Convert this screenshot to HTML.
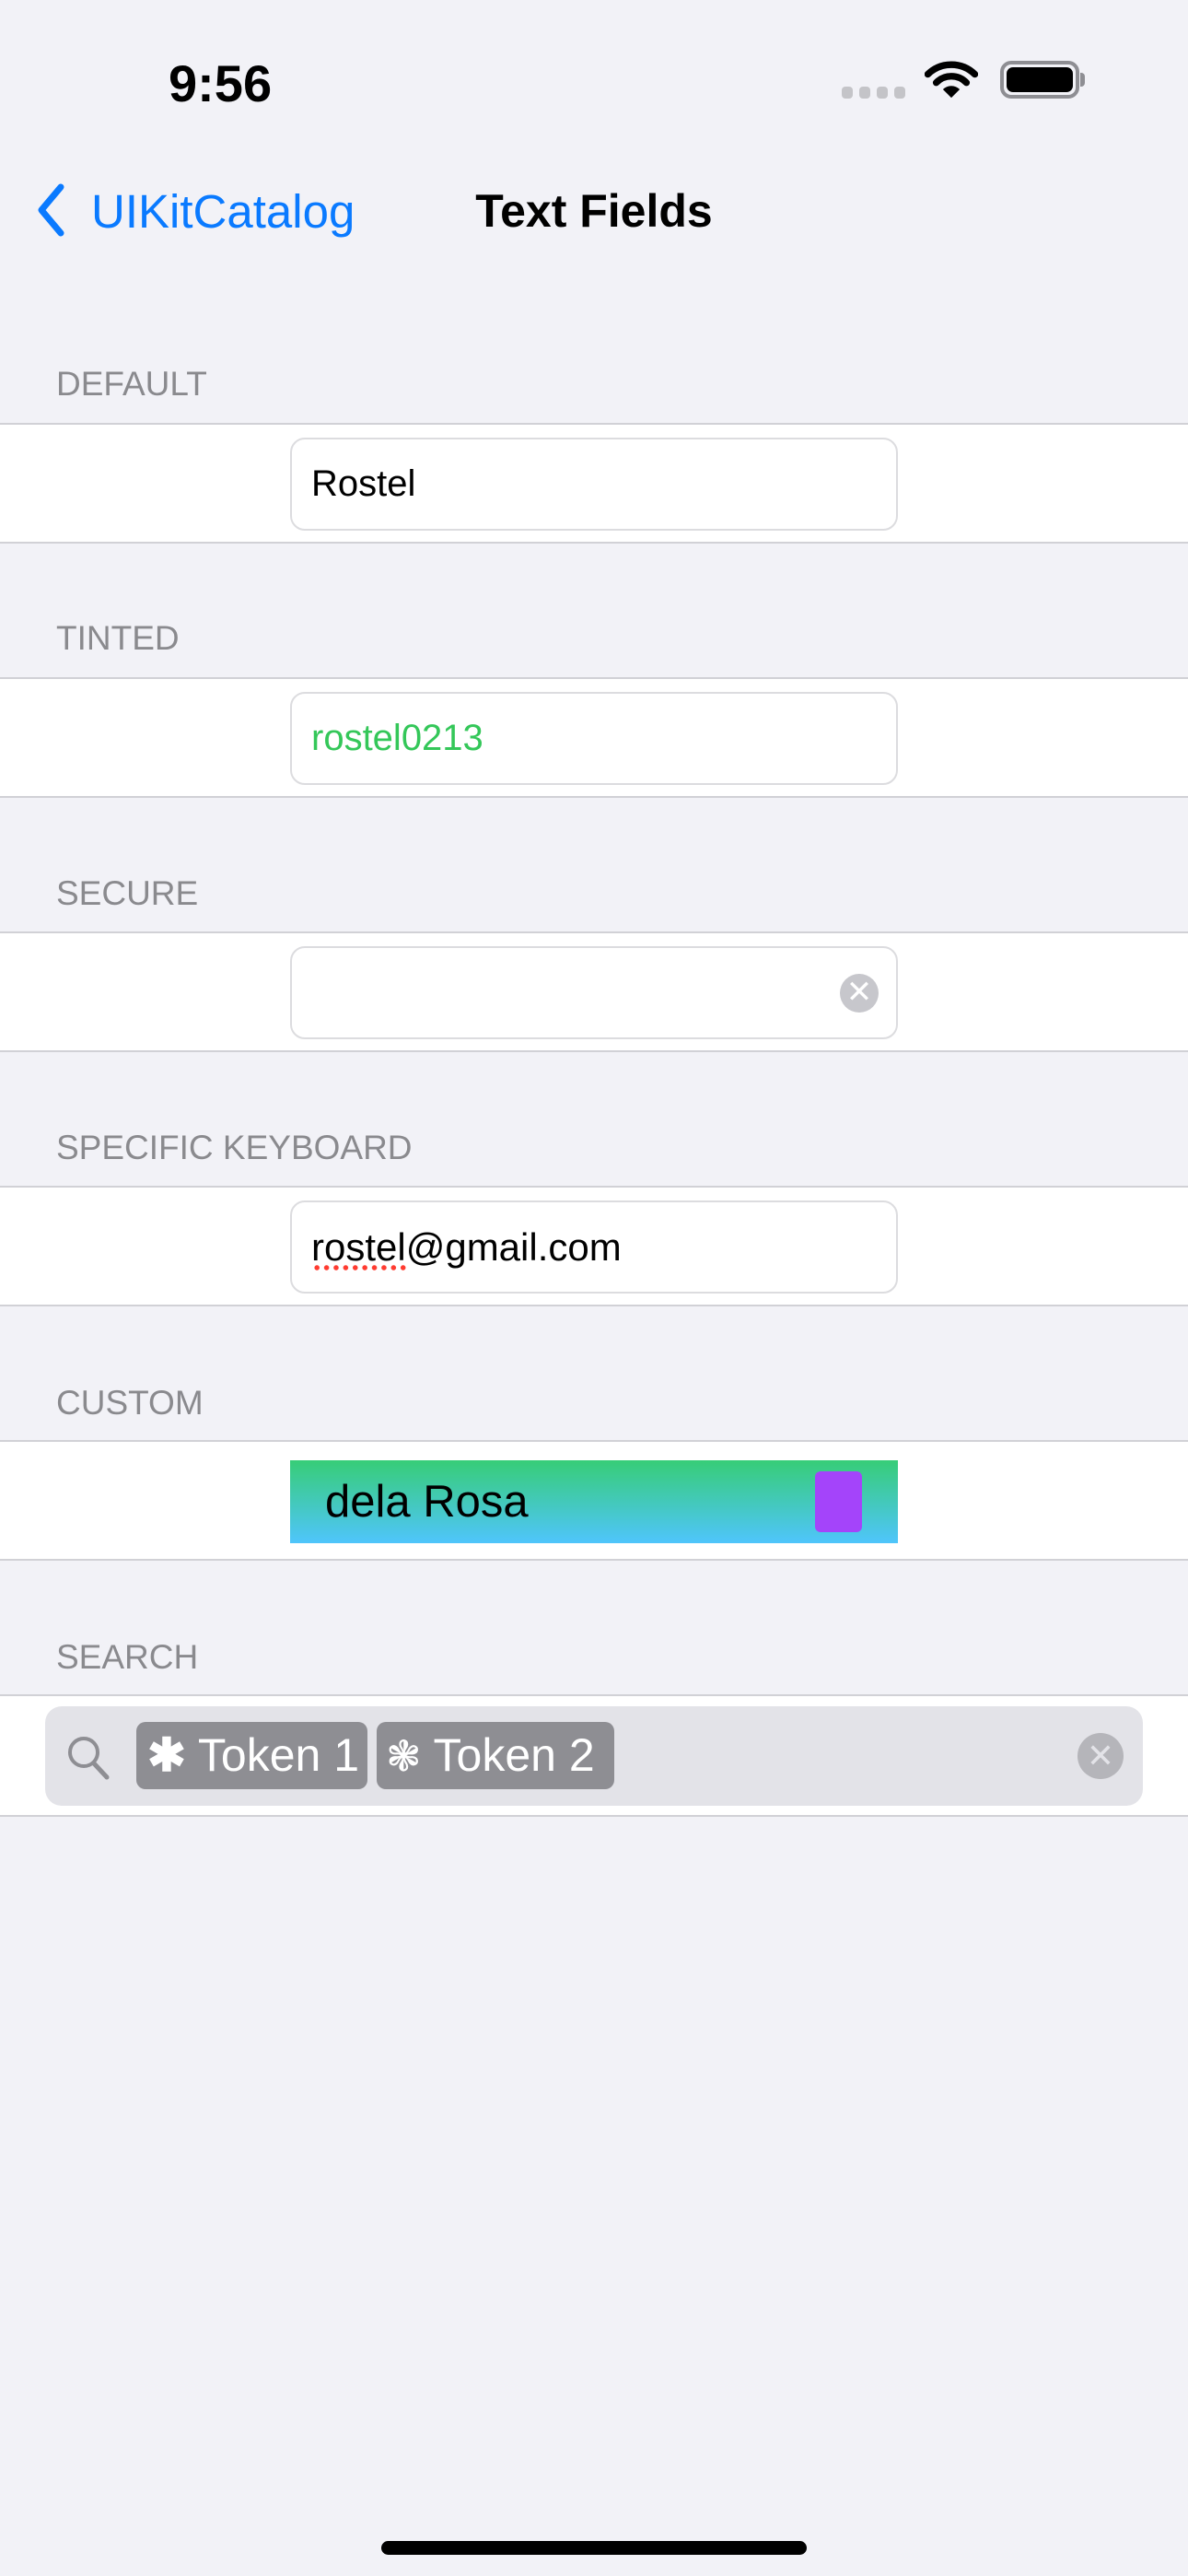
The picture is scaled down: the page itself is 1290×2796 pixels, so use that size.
<!DOCTYPE html>
<html><head><meta charset="utf-8"><style>
*{margin:0;padding:0;box-sizing:border-box}
body{width:1290px;height:2796px;background:#f2f2f7;font-family:"Liberation Sans",sans-serif;position:relative;overflow:hidden}
.a{position:absolute}
.lbl{position:absolute;left:61px;font-size:37px;color:#8a8a8e;line-height:1}
.row{position:absolute;left:0;width:1290px;height:131px;background:#fff;border-top:2px solid #d1d1d6;border-bottom:2px solid #d1d1d6}
.tf{position:absolute;left:315px;width:660px;height:101px;top:14px;border:2px solid #dcdcdf;border-radius:16px;background:#fff;font-size:40px;line-height:97px;padding-left:21px;color:#000}
</style></head><body>
<div class="a" style="left:183px;top:58px;font-size:56px;font-weight:bold">9:56</div>
<svg class="a" style="left:914px;top:94px" width="70" height="14"><g fill="#c4c4c8"><rect x="0" y="0" width="12" height="13" rx="4"/><rect x="19" y="0" width="12" height="13" rx="4"/><rect x="38" y="0" width="12" height="13" rx="4"/><rect x="57" y="0" width="12" height="13" rx="4"/></g></svg>
<svg class="a" style="left:1004px;top:66px" width="58" height="42" viewBox="0 0 62 46"><path d="M3 16 A40 40 0 0 1 59 16" stroke="#000" stroke-width="8" fill="none" stroke-linecap="round"/><path d="M13 26 A25 25 0 0 1 49 26" stroke="#000" stroke-width="8" fill="none" stroke-linecap="round"/><path d="M31 44 L21 34 A14 14 0 0 1 41 34 Z" fill="#000"/></svg>
<div class="a" style="left:1086px;top:66px;width:86px;height:41px;border:4px solid #8e8e93;border-radius:12px;padding:3px"><div style="width:100%;height:100%;background:#000;border-radius:7px"></div></div>
<div class="a" style="left:1173px;top:79px;width:5px;height:15px;background:#8e8e93;border-radius:0 4px 4px 0"></div>
<svg class="a" style="left:36px;top:198px" width="40" height="60"><path d="M30 5 L9 30 L30 55" stroke="#0a7aff" stroke-width="7" fill="none" stroke-linecap="round" stroke-linejoin="round"/></svg>
<div class="a" style="left:99px;top:200px;font-size:51px;color:#0a7aff">UIKitCatalog</div>
<div class="a" style="left:0;width:1290px;text-align:center;top:200px;font-size:50px;font-weight:bold">Text Fields</div>

<div class="lbl" style="top:398px">DEFAULT</div>
<div class="row" style="top:459px"><div class="tf">Rostel</div></div>
<div class="lbl" style="top:674px">TINTED</div>
<div class="row" style="top:735px"><div class="tf" style="color:#34c759">rostel0213</div></div>
<div class="lbl" style="top:951px">SECURE</div>
<div class="row" style="top:1011px"><div class="tf"><div class="a" style="left:595px;top:28px;width:42px;height:42px;border-radius:50%;background:#c7c7cc;color:#fff;font-size:34px;line-height:40px;text-align:center;padding:0">✕</div></div></div>
<div class="lbl" style="top:1227px">SPECIFIC KEYBOARD</div>
<div class="row" style="top:1287px"><div class="tf" style="font-size:42px">rostel@gmail.com<div class="a" style="left:22px;top:68px;width:104px;height:6px;background:radial-gradient(circle,#ff3b30 2.5px,transparent 3px) 0 0/10.4px 6px repeat-x"></div></div></div>
<div class="lbl" style="top:1504px">CUSTOM</div>
<div class="row" style="top:1563px"><div class="a" style="left:315px;top:20px;width:660px;height:90px;background:linear-gradient(#37cd77,#4fc5fc)"><div class="a" style="left:38px;top:15px;font-size:49px;line-height:60px">dela Rosa</div><div class="a" style="left:570px;top:12px;width:51px;height:66px;background:#a444fa;border-radius:6px"></div></div></div>
<div class="lbl" style="top:1780px">SEARCH</div>
<div class="row" style="top:1839px;height:133px"><div class="a" style="left:49px;top:11px;width:1192px;height:108px;background:#e3e3e8;border-radius:18px">
<svg class="a" style="left:22px;top:30px" width="54" height="52"><circle cx="20" cy="20" r="15" stroke="#8e8e93" stroke-width="4" fill="none"/><path d="M31 32 L45 47" stroke="#8e8e93" stroke-width="5" stroke-linecap="round"/></svg>
<div class="a" style="left:99px;top:17px;width:251px;height:73px;background:#8e8e93;border-radius:10px;color:#fff;font-size:50px;line-height:73px;padding-left:12px;white-space:nowrap"><span style="font-size:50px;font-weight:bold">✱</span> Token 1</div>
<div class="a" style="left:360px;top:17px;width:258px;height:73px;background:#8e8e93;border-radius:10px;color:#fff;font-size:50px;line-height:73px;padding-left:10px;white-space:nowrap"><span style="font-size:46px">❃</span> Token 2</div>
<div class="a" style="left:1121px;top:29px;width:50px;height:50px;border-radius:50%;background:#b5b5ba;color:#e3e3e8;font-size:36px;line-height:50px;text-align:center">✕</div>
</div></div>
<div class="a" style="left:414px;top:2758px;width:462px;height:15px;background:#000;border-radius:8px"></div>
</body></html>
